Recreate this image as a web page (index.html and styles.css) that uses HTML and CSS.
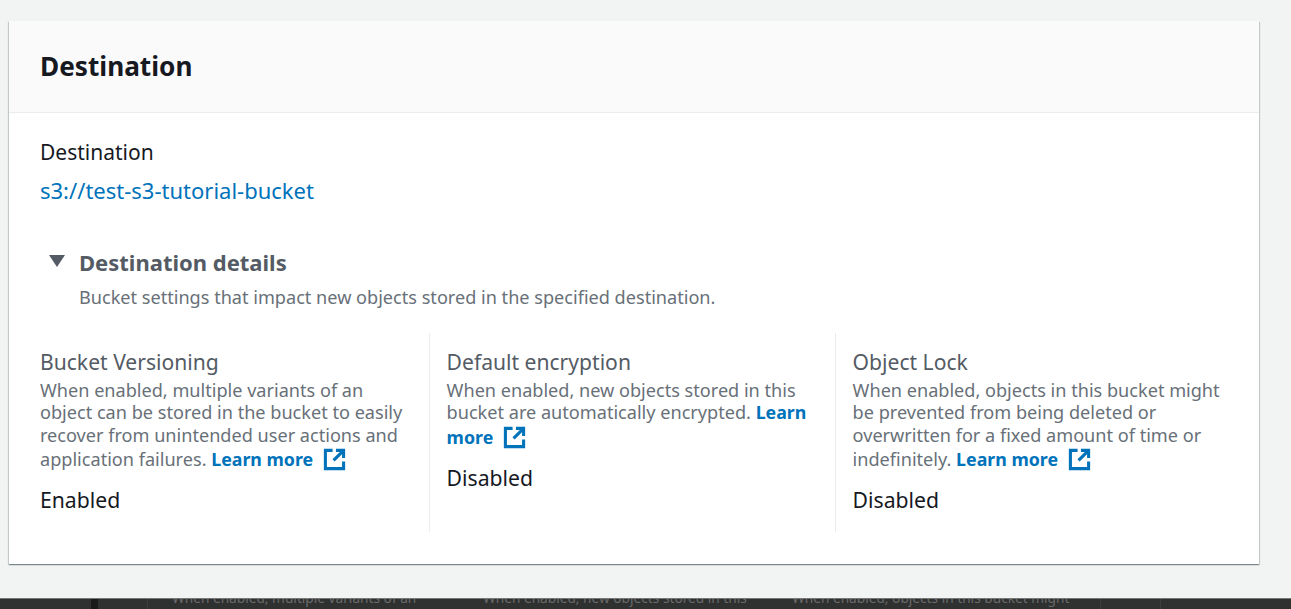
FILE: index.html
```html
<!DOCTYPE html>
<html lang="en">
<head>
<meta charset="utf-8">
<title>Destination</title>
<link rel="stylesheet" href="styles.css">
</head>
<body>
<svg class="defs" width="0" height="0" aria-hidden="true">
  <symbol id="ext" viewBox="0 0 24 24">
    <path d="M10 2.5H2.5v19h19V14" fill="none" stroke="currentColor" stroke-width="3.2"/>
    <path d="M11 13L20 4M13.5 2.5h8v8" fill="none" stroke="currentColor" stroke-width="3.2"/>
  </symbol>
</svg>
<main class="stage">
  <section class="card">
    <header class="card-head"><h2>Destination</h2></header>
    <div class="card-body">
      <div class="label">Destination</div>
      <a class="dest-link" href="#">s3://test-s3-tutorial-bucket</a>
      <div class="details">
        <div class="details-title">
          <svg class="caret" viewBox="0 0 16 12" aria-hidden="true"><path d="M0 0h16L8 12z"/></svg>
          <span>Destination details</span>
        </div>
        <p class="details-desc">Bucket settings that impact new objects stored in the specified destination.</p>
      </div>
      <div class="cols">
        <div class="col">
          <h3>Bucket Versioning</h3>
          <p class="desc">When enabled, multiple variants of an object can be stored in the bucket to easily recover from unintended user actions and application failures. <a class="learn" href="#">Learn more<svg class="ext"><use href="#ext"/></svg></a></p>
          <div class="value">Enabled</div>
        </div>
        <div class="col">
          <h3>Default encryption</h3>
          <p class="desc">When enabled, new objects stored in this bucket are automatically encrypted. <a class="learn" href="#">Learn more<svg class="ext"><use href="#ext"/></svg></a></p>
          <div class="value">Disabled</div>
        </div>
        <div class="col">
          <h3>Object Lock</h3>
          <p class="desc">When enabled, objects in this bucket might be prevented from being deleted or overwritten for a fixed amount of time or indefinitely. <a class="learn" href="#">Learn more<svg class="ext"><use href="#ext"/></svg></a></p>
          <div class="value">Disabled</div>
        </div>
      </div>
    </div>
  </section>
</main>
<footer class="strip">
  <div class="strip-bar"></div>
  <div class="strip-line a"></div>
  <div class="strip-line b"></div>
  <div class="strip-line c"></div>
  <div class="strip-text first">When enabled, multiple variants of an<br>object can be stored in the bucket</div>
  <div class="strip-text second">When enabled, new objects stored in this<br>bucket are automatically encrypted.</div>
  <div class="strip-text third">When enabled, objects in this bucket might<br>be prevented from being deleted</div>
</footer>
</body>
</html>
```
FILE: styles.css
```css
* { box-sizing: border-box; }
html, body { margin: 0; height: 609px; overflow: hidden; }
body {
  background: #f2f3f3;
  font-family: "Noto Sans", "Open Sans", sans-serif;
  color: #16191f;
  display: flex;
  flex-direction: column;
}
.defs { position: absolute; }
.stage { height: 598px; padding: 21px 32px 0 9px; flex: none; }
.card {
  background: #fff;
  height: 543px;
  box-shadow: 0 1px 1px 0 rgba(0,28,36,.3), 1px 1px 1px 0 rgba(0,28,36,.15), -1px 1px 1px 0 rgba(0,28,36,.15);
}
.card-head {
  height: 92px;
  background: #fafafa;
  border-bottom: 1px solid #eaeded;
  padding: 0 31px 2px;
  display: flex;
  align-items: center;
}
.card-head h2 { margin: 0; font-size: 26.2px; line-height: 36px; font-weight: 700; }
.card-body { padding: 26px 32px 0 31px; }
.label { font-size: 21px; line-height: 26px; }
.dest-link { display: block; margin-top: 12px; font-size: 22px; line-height: 26px; color: #0073bb; text-decoration: none; }
.details { margin-top: 44px; }
.details-title {
  display: flex;
  align-items: center;
  gap: 14px;
  padding-left: 9px;
  font-size: 22px;
  line-height: 30px;
  font-weight: 700;
  color: #545b64;
}
.caret { width: 16px; height: 12px; fill: #545b64; flex: none; margin-top: -2px; }
.details-desc { margin: 8px 0 0 39px; font-size: 18.13px; line-height: 24px; color: #687078; }
.cols { display: grid; grid-template-columns: 390px 406px 1fr; margin-top: 24px; height: 199px; margin-right: -24px; }
.col { padding: 16px 20px 0 0; border-right: 1px solid #eaeded; }
.col + .col { padding-left: 16.6px; }
.col:last-child { border-right: 0; }
.col h3 { margin: 0; font-size: 21.1px; line-height: 26px; font-weight: 400; color: #545b64; }
.desc { margin: 4px 0 0; font-size: 18.13px; line-height: 22.4px; color: #687078; }
.learn { color: #0073bb; font-weight: 700; font-size: 17.8px; text-decoration: none; }
.ext { width: 23px; height: 23px; margin: 2px 0 0 10px; vertical-align: -5px; color: #0073bb; }
.value { margin-top: 15.8px; font-size: 21.2px; line-height: 26px; }
.strip {
  height: 11px;
  background: #2f3030;
  border-top: 1px solid #777;
  position: relative;
  overflow: hidden;
  flex: none;
}
.strip-bar { position: absolute; left: 91px; top: 0; width: 7px; height: 11px; background: #1a1a1a; }
.strip-line { position: absolute; top: 0; width: 1px; height: 11px; background: #3c3d3d; }
.strip-line.a { left: 147px; }
.strip-line.b { left: 1100px; }
.strip-line.c { left: 1160px; }
.strip-text { position: absolute; top: -11px; font-size: 13.7px; line-height: 19px; color: #6a6a6a; white-space: nowrap; }
.first { left: 172px; }
.second { left: 483px; }
.third { left: 792px; }
```
